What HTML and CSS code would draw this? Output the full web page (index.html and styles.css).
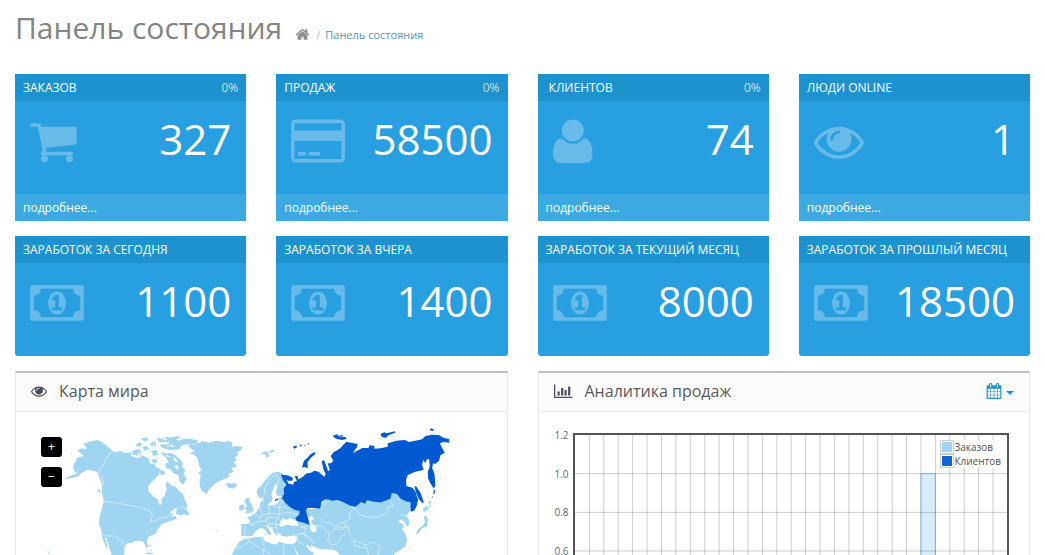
FILE: index.html
```html
<!DOCTYPE html>
<html lang="ru">
<head>
<meta charset="utf-8">
<title>Панель состояния</title>
<link rel="stylesheet" href="styles.css">
</head>
<body>
<svg class="sprite" aria-hidden="true">
  <symbol id="money" viewBox="0 0 1920 1792"><path d="M768 1152h384v-96h-128v-448h-114l-148 137 77 80q42-37 55-57h2v288h-128v96zm512-256q0 70-21 142t-59.500 134-101.500 101-138 39-138-39-101.500-101-59.500-134-21-142 21-142 59.500-134 101.500-101 138-39 138 39 101.500 101 59.500 134 21 142zm512 256v-512q-106 0-181-75t-75-181h-1152q0 106-75 181t-181 75v512q106 0 181 75t75 181h1152q0-106 75-181t181-75zm128-832v1152q0 26-19 45t-45 19h-1792q-26 0-45-19t-19-45v-1152q0-26 19-45t45-19h1792q26 0 45 19t19 45z"/></symbol>
  <symbol id="eye" viewBox="0 0 1792 1792"><path d="M1664 960q-152-236-381-353 61 104 61 225 0 185-131.500 316.500t-316.500 131.500-316.500-131.500-131.500-316.500q0-121 61-225-229 117-381 353 133 205 333.500 326.500t434.500 121.500 434.500-121.500 333.500-326.500zm-720-384q0-20-14-34t-34-14q-125 0-214.500 89.500t-89.500 214.500q0 20 14 34t34 14 34-14 14-34q0-86 61-147t147-61q20 0 34-14t14-34zm848 384q0 34-20 69-140 230-376.500 368.500t-499.500 138.500-499.500-139-376.500-368q-20-35-20-69t20-69q140-229 376.500-368t499.500-139 499.500 139 376.500 368q20 35 20 69z"/></symbol>
</svg>

<header class="page-header">
  <h1 class="page-title">Панель состояния</h1>
  <nav class="breadcrumb" aria-label="Навигация">
    <a class="crumb-home" href="#" aria-label="Главная"><svg class="icon-home" viewBox="0 0 1792 1792"><path d="M1472 992v480q0 26-19 45t-45 19h-384v-384h-256v384h-384q-26 0-45-19t-19-45v-480q0-1 .5-3t.5-3l575-474 575 474q1 2 1 6zm223-69l-62 74q-8 9-21 11h-3q-13 0-21-7l-692-577-692 577q-12 8-24 7-13-2-21-11l-62-74q-8-10-7-23.500t11-21.500l719-599q32-26 76-26t76 26l244 204v-195q0-14 9-23t23-9h192q14 0 23 9t9 23v408l219 182q10 8 11 21.500t-7 23.500z"/></svg></a>
    <span class="crumb-sep">/</span>
    <a class="crumb-link" href="#">Панель состояния</a>
  </nav>
</header>

<main class="content">
  <section class="tiles">
    <article class="tile">
      <div class="tile-heading"><span>ЗАКАЗОВ</span><span class="tile-percent">0%</span></div>
      <div class="tile-body">
        <svg class="tile-icon" viewBox="64 0 1920 1792"><path d="M704 1536q0 52-38 90t-90 38-90-38-38-90 38-90 90-38 90 38 38 90zm896 0q0 52-38 90t-90 38-90-38-38-90 38-90 90-38 90 38 38 90zm128-1088v512q0 24-16.500 42.500t-40.500 21.500l-1044 122q13 60 13 70 0 16-24 64h920q26 0 45 19t19 45-19 45-45 19h-1024q-26 0-45-19t-19-45q0-11 8-31.500t16-36 21.500-40 15.500-29.500l-177-823h-204q-26 0-45-19t-19-45 19-45 45-19h256q16 0 28.500 6.500t19.500 15.500 13 24.500 8 26 5.500 29.500 4.500 26h1201q26 0 45 19t19 45z"/></svg>
        <h2 class="tile-value">327</h2>
      </div>
      <div class="tile-footer"><a href="#">подробнее...</a></div>
    </article>
    <article class="tile">
      <div class="tile-heading"><span>ПРОДАЖ</span><span class="tile-percent">0%</span></div>
      <div class="tile-body">
        <svg class="tile-icon" viewBox="0 0 54 50"><path fill-rule="evenodd" d="M4.500 3.500h45a4.500 4.500 0 0 1 4.500 4.500v34a4.500 4.500 0 0 1-4.500 4.500h-45A4.500 4.500 0 0 1 0 42V8a4.500 4.500 0 0 1 4.500-4.500zM3.600 7.200v7.300h46.800V7.200zM3.600 25v18h46.800V25zM7 36h7.500v3.500H7zM18 36h11v3.500H18z"/></svg>
        <h2 class="tile-value">58500</h2>
      </div>
      <div class="tile-footer"><a href="#">подробнее...</a></div>
    </article>
    <article class="tile">
      <div class="tile-heading"><span>&nbsp;КЛИЕНТОВ</span><span class="tile-percent">0%</span></div>
      <div class="tile-body">
        <svg class="tile-icon" viewBox="0 0 54 50"><circle cx="19.800" cy="14.500" r="11"/><path d="M9.500 22.500C13 26.500 16 27.800 19.800 27.800s7-1.300 10.400-5.300C37.500 22.500 39.500 30 39.500 38.500c0 5.500-3 8.500-8 8.500H8C3 47 0 44 0 38.500 0 30 2 22.500 9.500 22.500z"/></svg>
        <h2 class="tile-value">74</h2>
      </div>
      <div class="tile-footer"><a href="#">подробнее...</a></div>
    </article>
    <article class="tile">
      <div class="tile-heading"><span>ЛЮДИ ONLINE</span></div>
      <div class="tile-body">
        <svg class="tile-icon tile-icon-square"><use href="#eye"/></svg>
        <h2 class="tile-value">1</h2>
      </div>
      <div class="tile-footer"><a href="#">подробнее...</a></div>
    </article>
    <article class="tile tile-plain">
      <div class="tile-heading"><span>ЗАРАБОТОК ЗА СЕГОДНЯ</span></div>
      <div class="tile-body"><svg class="tile-icon"><use href="#money"/></svg><h2 class="tile-value">1100</h2></div>
    </article>
    <article class="tile tile-plain">
      <div class="tile-heading"><span>ЗАРАБОТОК ЗА ВЧЕРА</span></div>
      <div class="tile-body"><svg class="tile-icon"><use href="#money"/></svg><h2 class="tile-value">1400</h2></div>
    </article>
    <article class="tile tile-plain">
      <div class="tile-heading"><span>ЗАРАБОТОК ЗА ТЕКУЩИЙ МЕСЯЦ</span></div>
      <div class="tile-body"><svg class="tile-icon"><use href="#money"/></svg><h2 class="tile-value">8000</h2></div>
    </article>
    <article class="tile tile-plain">
      <div class="tile-heading"><span>ЗАРАБОТОК ЗА ПРОШЛЫЙ МЕСЯЦ</span></div>
      <div class="tile-body"><svg class="tile-icon"><use href="#money"/></svg><h2 class="tile-value">18500</h2></div>
    </article>
  </section>

  <section class="panels">
    <article class="panel">
      <div class="panel-heading">
        <svg class="panel-icon"><use href="#eye"/></svg>
        <h3 class="panel-title panel-title-map">Карта мира</h3>
      </div>
      <div class="panel-body map">
        <svg class="map-svg" viewBox="33 21 1380 780" role="img" aria-label="Карта мира">
          <g class="land">
            <path d="M130 178L150 168 172 160 162 152 158 140 168 122 172 112 184 112 190 106 174 94 176 88 186 85 197 89 199 82 190 72 205 65 235 60 250 70 265 82 281 97 300 93 318 100 330 96 338 108 348 118 360 116 368 128 385 122 392 132 402 130 408 142 420 146 418 160 405 176 390 190 383 202 385 213 400 230 414 238 416 252 420 256 425 248 424 236 434 226 440 207 436 196 440 184 448 190 452 196 466 200 478 214 486 218 492 232 502 258 500 264 482 262 462 266 448 278 458 280 452 290 466 288 470 295 448 304 436 308 425 312 415 325 406 340 386 350 380 360 384 382 378 383 370 366 362 362 346 362 336 368 320 370 312 385 314 430 280 430 275 405 266 375 258 352 254 352 264 384 258 382 246 350 245 335 237 312 238 290 246 265 251 245 246 220 246 195 238 172 232 156 218 152 204 148 185 158 172 170z"/>
            <path d="M335 95l16-8 12 6-4 12 22 6 8 10-12 8-22-4-14-12zM345 75l14-8 8 6-10 8zM366 82l14-4 8 8-14 6zM362 56l18-4 6 8-14 4zM388 72l14-8 8 10-12 6zM392 92l18-2 4 14-14 4zM408 52l16 4 18-6 12 6-12 10-26 0zM418 74l26-2 10 8 26 0-2 8-30 2-20-6zM420 96l18 4 18 0 20 14 12 14-2 14 10 8-6 12 10 14-12 18-10-10-4-20-14-4-8-12-14-4-2-14 10-2-8-14zM446 54l26-6 16 8 24 0 24 6-16 10-28 2-18 10-14-6-10-10zM398 116l14 4-4 10-14-4zM420 148l16 8-6 10-10-4zM444 62l12 8-8 6zM470 265l10-3 18 4 11 16-8 4-8-4-12 4-14-6zM232 205l8 4 2 10-6-2zM246 172l4 14 6 14-6-4zM65 375l4 1 2 4zM74 384l4 2zM82 390l6 6-4 4zM152 100l4-2v5zM374 400l14-4 14 8zM385 378l5-4 4 4zM392 386l4 4-3 2z"/>
          </g>
          <path class="sea" d="M350 98l8 4 6 10-8 0zM368 100l10 12 10 0-4-8zM428 54l6 8 8-4zM468 56l8 6 14-4-12-4zM436 104l6 8 10-2zM458 112l4 10 12 4-6-10zM470 134l-8 6 10 10 4-6zM438 76l4 6 8-2zM330 106l18 8 10-4-12-6zM402 70l-6 6 4 2z"/>
          <g class="land" transform="translate(420 0)">
            <path d="M85 80L90 72 106 74 102 66 120 70 124 63 145 68 168 62 192 66 206 62 217 70 214 80 232 78 248 82 240 92 230 96 234 105 224 112 230 122 220 126 230 140 214 144 220 156 205 160 208 170 185 180 165 190 152 204 144 212 140 222 128 214 120 202 118 184 122 168 114 158 126 150 117 138 112 115 104 105 88 100 104 94z"/>
            <path d="M197 190l10-2 4 4 14-4 6 8-12 9-14-2-4-6zM305 98l14-4 8 2-6 6 8 4-8 8-6-10-10-2zM328 92l18-3-8 8-8 2zM237 258l12-6 4 8-4 9-12 2zM256 236l8-4 5 4-2 8 6 6 4 12 4 3-6 12-22 3 8-9-8-4 7-8-2-8-6-4zM157 328l4 2-3 2zM168 330l6 2-4 2zM206 356l5 2-4 1z"/>
            <path d="M291 224L290 208 304 196 312 184 326 168 340 157 356 155 366 162 375 190 375 225 372 235 385 255 412 268 440 266 500 270 500 430 210 430 214 405 224 384 240 362 250 358 243 348 243 312 268 312 268 300 260 292 272 288 286 278 298 262 302 242 310 244 308 230 300 236z"/>
          </g>
          <path class="land" transform="translate(840 0)" d="M10 272L60 262 75 235 275 218 292 222 300 235 328 242 330 270 318 288 326 300 326 316 318 318 312 304 303 298 292 305 306 312 312 320 304 326 316 345 320 362 314 380 296 392 282 400 276 430 10 430zM354 338l-2-10 14-10 8-14-4-14 8-4 5 14-4 20-14 4-8 14zM368 268l8-10 10 6-8 8-8 4zM326 378l3-4-2 14zM384 260l10-8-6 10zM418 168l6 2-4 2zM348 332l6 4-2 8-4-6z"/>
          <g class="sea" transform="translate(420 0)">
            <path d="M345 192l6 2 0 12-5 10 4 10 20 3-14 3-2 16-8 6-18 2-6-3 12-8 3-12-4-8 4-14z"/>
            <path d="M243 348l32 0 12-16 14-8 10 2 12 16 8 4 1-9-10-14-8-6 8-2 14 12 8 14 6 6 2-8 8 2 4 6 14 2 22-3 10 2-2 18-10 6-24-2-18-6-8 10-16-4-20-8-4-12-18 1-38 6-20 10z"/>
            <path d="M360 306l8-12 10 6 12-6 22 12 2 12-14 0-18-4-20 6-6-4zM396 372l10 16 14 24-5 0zM440 372l14 14 16 6 0 6-18-4-14-14z"/>
          </g>
          <path class="sea" transform="translate(840 0)" d="M22 294l12-6 8 8-10 6 6 12 10 4 0 16-14 2-6-14 4-4-10-12zM30 374l16 8 22 6 24 0 16 4 12 14 6 24-80 0-8-36z"/>
          <g class="russia">
            <g transform="translate(420 0)"><path d="M362 163L384 166 398 174 396 182 385 182 378 180 386 192 400 193 400 186 410 183 404 171 406 166 413 170 413 178 428 170 438 160 452 158 462 152 475 155 487 166 492 170 496 162 490 150 484 124 491 120 498 138 503 153 509 150 502 130 512 130 519 122 511 108 520 97 540 85 548 76 558 65 572 68 592 72 590 82 582 92 578 100 590 92 606 84 624 84 628 76 642 78 642 86 660 85 682 80 682 70 708 62 734 60 745 66 765 62 785 58 795 48 815 44 835 45 850 54 866 57 867 68 850 66 838 70 845 84 853 98 840 106 836 122 824 132 818 130 815 144 822 160 825 196 820 205 810 190 803 175 802 155 808 140 806 118 800 118 795 128 788 120 785 135 790 148 780 152 765 155 742 165 737 180 738 198 745 200 756 203 765 214 773 240 768 260 761 272 751 275 750 262 750 246 738 244 720 235 710 222 694 219 690 236 660 247 636 244 620 240 614 251 602 246 586 260 570 257 546 245 532 240 514 242 496 237 484 245 480 265 458 264 441 264 437 272 440 285 445 300 448 315 430 308 410 303 405 294 417 284 418 273 402 269 388 260 372 245 365 232 372 220 370 206 378 194 368 180z"/>
            <path d="M425 142l6-20 10-8 8-10 14-8 3 5-14 12-10 12 0 20-8-4zM398 80l10-4 2 6-8 4zM418 74l6 0 0 4-5 1zM431 74l5 1-2 4zM441 70l5 0-2 5zM344 239l8-4 2 4-8 4z"/></g>
            <path transform="translate(840 0)" d="M97 48l12-5 8 6 18 2 4 6-14 3-18-4zM118 48l6-4 4 4zM240 42l12-5 6 3 26-6 0 4-20 8-8 8-12-4zM387 30l6-5 8 4-5 4zM342 198l6 2 12 18 10 28-3 4-12-14-8-18zM400 208l4 2-2 12-3 0zM396 228l2 2-3 6zM388 244l3 2-4 6z"/>
          </g>
          <g class="border">
            <path d="M273 95L235 157 246 168 250 196M250 243L310 252 360 262 386 270 397 285 391 305 405 304 420 293 438 292 450 278M245 342L258 347 289 349 297 362 306 358 315 380"/>
            <path transform="translate(420 0)" d="M310 230L315 200 330 175 350 162 356 178 352 196M372 245L360 250 358 262 335 258M268 312L285 317M270 312L300 304 298 290 282 280M298 290L308 284 300 270 303 262M308 284L328 280 326 256M328 280L358 282 356 262 380 262M300 304L318 302 328 292 352 292 358 282 380 276 412 284M318 302L326 312 345 312 352 292 362 302M326 312L334 325 350 322 345 312 365 318M350 322L352 336M328 280L318 290 318 302M372 245L355 240M255 314L254 345M262 352L268 364 245 380 225 384M303 343L306 362 312 380 308 405M370 368L371 405M268 364L300 385 330 400M408 345L430 340 436 325 420 318M430 340L440 355 462 370M410 350L415 366 432 374M445 322L470 330M448 315L430 320"/>
            <path transform="translate(840 0)" d="M60 265L90 238M152 258L168 270 180 285 205 292 240 290 262 275 260 262 278 258 272 244M165 260L156 270 148 280 150 296 132 304 142 318 120 322 105 320 90 310 70 305 55 290M48 315L66 320 86 340 104 325 122 330 142 318M86 340L82 360 92 375 112 370 122 350 140 335M0 340L20 345 42 365M142 318L150 345 160 360 195 375 220 365 240 380 232 405M160 360L165 378 200 385 205 405M195 375L200 385M105 320L122 308 135 312M300 284L318 288M0 320L20 325"/>
          </g>
        </svg>
        <div class="map-zoom">
          <button type="button" aria-label="Увеличить">+</button>
          <button type="button" aria-label="Уменьшить">−</button>
        </div>
      </div>
    </article>

    <article class="panel">
      <div class="panel-heading">
        <svg class="panel-icon panel-icon-chart" viewBox="0 0 19 16"><path d="M0 1.500h1.300v12.200H18.500V15H0zM3.500 8.500h2.200v4H3.500zM7.100 5h2.200v7.500H7.100zM10.500 7h2.200v5.500h-2.200zM14.100 3.500h2.200v9h-2.200z"/></svg>
        <h3 class="panel-title">Аналитика продаж</h3>
        <button type="button" class="range-button" aria-label="Период">
          <svg class="icon-calendar" viewBox="0 0 1792 1792"><path d="M192 1664h288v-288h-288v288zm352 0h320v-288h-320v288zm-352-352h288v-320h-288v320zm352 0h320v-320h-320v320zm-352-384h288v-288h-288v288zm736 736h320v-288h-320v288zm-384-736h320v-288h-320v288zm768 736h288v-288h-288v288zm-384-352h320v-320h-320v320zm-352-864v-288q0-13-9.500-22.500t-22.500-9.500h-64q-13 0-22.500 9.500t-9.500 22.500v288q0 13 9.500 22.500t22.500 9.500h64q13 0 22.500-9.500t9.500-22.500zm736 864h288v-320h-288v320zm-384-384h320v-288h-320v288zm384 0h288v-288h-288v288zm32-480v-288q0-13-9.500-22.500t-22.500-9.500h-64q-13 0-22.500 9.500t-9.500 22.500v288q0 13 9.500 22.500t22.500 9.500h64q13 0 22.500-9.500t9.500-22.500zm384-64v1280q0 52-38 90t-90 38h-1408q-52 0-90-38t-38-90v-1280q0-52 38-90t90-38h128v-96q0-66 47-113t113-47h64q66 0 113 47t47 113v96h384v-96q0-66 47-113t113-47h64q66 0 113 47t47 113v96h128q52 0 90 38t38 90z"/></svg>
          <svg class="icon-caret" viewBox="0 0 8 4"><path d="M0 0h8L4 4z"/></svg>
        </button>
      </div>
      <div class="panel-body chart">
        <div class="chart-axis"><span>1.2</span><span>1.0</span><span>0.8</span><span>0.6</span><span>0.4</span><span>0.2</span><span>0.0</span></div>
        <div class="chart-plot">
          <svg class="chart-svg" viewBox="0 0 300 60" preserveAspectRatio="none" aria-hidden="true">
            <rect class="chart-bar" x="240" y="10" width="10" height="50"/>
            <path class="chart-grid" d="M10 0V60M20 0V60M30 0V60M40 0V60M50 0V60M60 0V60M70 0V60M80 0V60M90 0V60M100 0V60M110 0V60M120 0V60M130 0V60M140 0V60M150 0V60M160 0V60M170 0V60M180 0V60M190 0V60M200 0V60M210 0V60M220 0V60M230 0V60M240 0V60M250 0V60M260 0V60M270 0V60M280 0V60M290 0V60M0 10H300M0 20H300M0 30H300M0 40H300M0 50H300"/>
          </svg>
          <ul class="legend">
            <li><span class="swatch swatch-orders"></span>Заказов</li>
            <li><span class="swatch swatch-clients"></span>Клиентов</li>
          </ul>
        </div>
      </div>
    </article>
  </section>
</main>
</body>
</html>
```

FILE: styles.css
```css
* { box-sizing: border-box; }
html { overflow: hidden; }
body {
  margin: 0;
  padding: 0 15px;
  background: #fff;
  color: #666;
  font: 12px/17px "Open Sans", "Noto Sans", sans-serif;
}
h1, h2, h3, ul { margin: 0; padding: 0; font-weight: 400; }
a { color: inherit; text-decoration: none; }
button { border: 0; padding: 0; background: none; font: inherit; cursor: pointer; }
svg { display: block; flex: none; fill: currentColor; }
.sprite { position: absolute; width: 0; height: 0; }

.page-header { display: flex; align-items: baseline; gap: 13px; padding-top: 8px; height: 74px; }
.page-title { font-size: 30px; line-height: 40px; color: #848484; }
.breadcrumb { display: flex; align-items: baseline; font-size: 11px; }
.crumb-home { align-self: center; color: #8c8c8c; }
.icon-home { width: 15px; height: 15px; }
.crumb-sep { padding: 0 5px 0 6px; color: #bbb; }
.crumb-link { color: #5a8fbe; }

.tiles { display: grid; grid-template-columns: repeat(4, 1fr); gap: 15px 30px; }
.tile { background: #279fe0; color: #fff; }
.tile-plain { border-radius: 1px 1px 3px 3px; overflow: hidden; }
.tile-heading { display: flex; justify-content: space-between; padding: 5px 8px; background: #1e91cf; }
.tile-percent { color: #c3e1f3; }
.tile-body { display: flex; justify-content: space-between; padding: 15px 15px 28px; }
.tile-icon { width: 54px; height: 50px; fill: #68bbe9; }
.tile-icon-square { width: 50px; }
.tile-value { font-size: 42px; line-height: 46px; }
.tile-footer { padding: 5px 8px; background: #3da9e3; }

.panels { display: grid; grid-template-columns: 1fr 1fr; gap: 30px; margin-top: 15px; }
.panel { border: 1px solid #e8e8e8; border-top: 2px solid #bfbfbf; }
.panel-heading {
  display: flex;
  align-items: center;
  padding: 7px 15px 9px;
  border-bottom: 1px solid #e8e8e8;
  background: #fcfcfc;
}
.panel-icon { width: 16px; height: 16px; fill: #4c4d5a; }
.panel-icon-chart { width: 19px; }
.panel-title { margin-left: 12px; font-size: 16px; line-height: 22px; color: #595959; }
.range-button { display: flex; align-items: center; gap: 4px; margin-left: auto; color: #1e91cf; }
.icon-calendar { width: 16px; height: 16px; }
.icon-caret { width: 8px; height: 4px; margin-top: 4px; }
.panel-body { padding: 15px; }

.map { position: relative; }
.map-svg { width: 100%; height: auto; }
.land { fill: #9fd5f1; }
.sea { fill: #fff; }
.russia { fill: #0059d1; }
.border { fill: none; stroke: #e4f4fc; stroke-width: 2; stroke-linejoin: round; }
.map-zoom { position: absolute; left: 25px; top: 25px; display: grid; gap: 10px; }
.map-zoom button {
  width: 21px;
  height: 20px;
  border-radius: 3px;
  background: #000;
  color: #fff;
  line-height: 20px;
  text-align: center;
}

.chart { display: flex; gap: 4px; padding: 21px 20px 15px 16px; }
.chart-axis {
  display: flex;
  flex-direction: column;
  justify-content: space-between;
  height: 246px;
  margin-top: -5px;
  font-size: 10px;
  line-height: 14px;
  color: #666;
}
.chart-plot { position: relative; flex: 1; height: 236px; border: 2px solid #545454; }
.chart-svg { width: 100%; height: 100%; }
.chart-grid {
  fill: none;
  stroke: #000;
  stroke-opacity: 0.2;
  stroke-width: 1;
  vector-effect: non-scaling-stroke;
  shape-rendering: crispEdges;
}
.chart-bar { fill: #d9edf9; stroke: #9fd5f1; stroke-width: 1; vector-effect: non-scaling-stroke; }
.legend {
  position: absolute;
  top: 5px;
  right: 6px;
  background: rgba(255, 255, 255, 0.85);
  list-style: none;
  font-size: 10px;
  line-height: 14px;
  color: #545454;
}
.legend li { display: flex; align-items: center; }
.swatch { width: 14px; height: 14px; border: 1px solid #ccc; background-clip: content-box; padding: 1px; }
.swatch-orders { background-color: #9fd5f1; }
.swatch-clients { background-color: #1065d2; }
```
